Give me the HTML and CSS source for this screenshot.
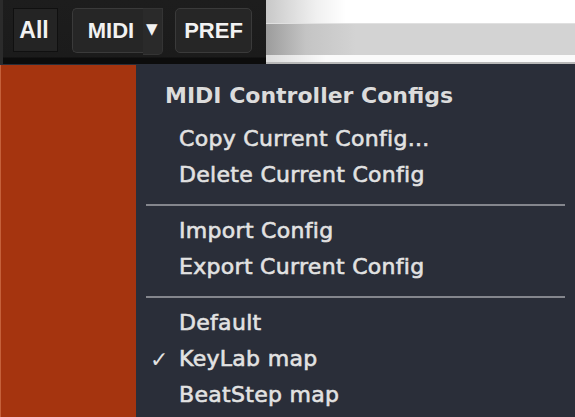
FILE: index.html
```html
<!DOCTYPE html>
<html>
<head>
<meta charset="utf-8">
<link rel="stylesheet" href="styles.css">
</head>
<body>
<div class="screen">
  <div class="top">
    <div class="toolbar">
      <div class="btn btn-all">All</div>
      <div class="split">
        <div class="btn btn-midi">MIDI</div>
        <div class="arrow">▼</div>
      </div>
      <div class="btn btn-pref">PREF</div>
    </div>
    <div class="chrome">
      <div class="chrome-top"></div>
      <div class="chrome-band"></div>
      <div class="chrome-light"></div>
      <div class="chrome-line"></div>
    </div>
  </div>
  <div class="bottom">
    <div class="panel"></div>
    <div class="menu">
      <div class="menu-title">MIDI Controller Configs</div>
      <div class="item">Copy Current Config...</div>
      <div class="item">Delete Current Config</div>
      <div class="sep"></div>
      <div class="item">Import Config</div>
      <div class="item">Export Current Config</div>
      <div class="sep"></div>
      <div class="item">Default</div>
      <div class="item checked"><span class="check">✓</span>KeyLab map</div>
      <div class="item">BeatStep map</div>
    </div>
  </div>
</div>
</body>
</html>
```
FILE: styles.css
```css
html, body {
  margin: 0;
  padding: 0;
  background: #2a2e39;
}
.screen {
  width: 575px;
  height: 417px;
  overflow: hidden;
  display: flex;
  flex-direction: column;
  font-family: "DejaVu Sans", "Open Sans", sans-serif;
}
.top {
  display: flex;
  height: 64px;
  flex: none;
}
.toolbar {
  width: 266px;
  box-sizing: border-box;
  background: linear-gradient(#1d1d1d 0, #1b1b1b 57px, #0c0c0c 58px, #0c0c0c 64px);
  border-left: 3px solid #2b2b2b;
  display: flex;
  align-items: flex-start;
  padding: 8px 0 0 10px;
}
.btn {
  box-sizing: border-box;
  height: 45px;
  color: #f2f2f2;
  font-family: "Liberation Sans", Arial, sans-serif;
  font-weight: bold;
  font-size: 22px;
  display: flex;
  align-items: center;
  justify-content: center;
}
.btn-all {
  width: 45px;
  height: 44px;
  background: #242424;
  border: 1px solid #101010;
  font-size: 23px;
  padding-right: 3px;
}
.split {
  display: flex;
  align-items: flex-start;
  margin-left: 14px;
}
.btn-midi {
  width: 71px;
  background: #262626;
  border: 1px solid #3a3a3a;
  border-right: none;
  border-radius: 5px 0 0 5px;
  padding-left: 6px;
}
.arrow {
  box-sizing: border-box;
  width: 20px;
  height: 47px;
  background: #2a2a2a;
  border: 1px solid #343434;
  border-left: none;
  border-radius: 0 0 5px 0;
  color: #f2f2f2;
  font-family: "DejaVu Sans", sans-serif;
  font-size: 15px;
  padding-top: 11px;
  padding-left: 3px;
}
.btn-pref {
  width: 77px;
  margin-left: 12px;
  background: #262626;
  border: 1px solid #3a3a3a;
  border-radius: 5px;
}
.chrome {
  flex: 1;
  display: flex;
  flex-direction: column;
}
.chrome-top {
  height: 23px;
  background: linear-gradient(90deg, #c8c8c8 0, #f0f0f0 50px, #ffffff 80px);
}
.chrome-band {
  height: 32px;
  background: linear-gradient(90deg, #9c9c9c 0, #c4c4c4 40px, #d3d3d3 90px);
  border-top: 1px solid #e0e0e0;
  box-sizing: border-box;
}
.chrome-light {
  height: 7px;
  background: linear-gradient(90deg, #dcdcdc 0, #fafafa 60px);
}
.chrome-line {
  height: 2px;
  background: #b8b8b8;
}
.bottom {
  flex: 1;
  display: flex;
}
.panel {
  width: 136px;
  margin-top: 1px;
  background: #a5340f;
  border-left: 1px solid #c5603a;
  box-sizing: border-box;
}
.menu {
  flex: 1;
  background: #2a2e39;
  padding: 17px 10px 0 10px;
  color: #e2e2e2;
}
.menu-title {
  font-weight: bold;
  font-size: 22px;
  height: 30px;
  line-height: 30px;
  padding-left: 19px;
  margin-bottom: 10px;
  white-space: nowrap;
  color: #dcdcdc;
}
.item {
  font-size: 22px;
  letter-spacing: 0.3px;
  height: 36px;
  line-height: 36px;
  padding-left: 33px;
  position: relative;
  -webkit-text-stroke: 0.6px #e2e2e2;
  white-space: nowrap;
}
.check {
  position: absolute;
  left: 4px;
  top: 1px;
  font-size: 22px;
  -webkit-text-stroke: 0;
}
.sep {
  height: 2px;
  background: #84868d;
  margin: 11px 0 7px 0;
}
```
